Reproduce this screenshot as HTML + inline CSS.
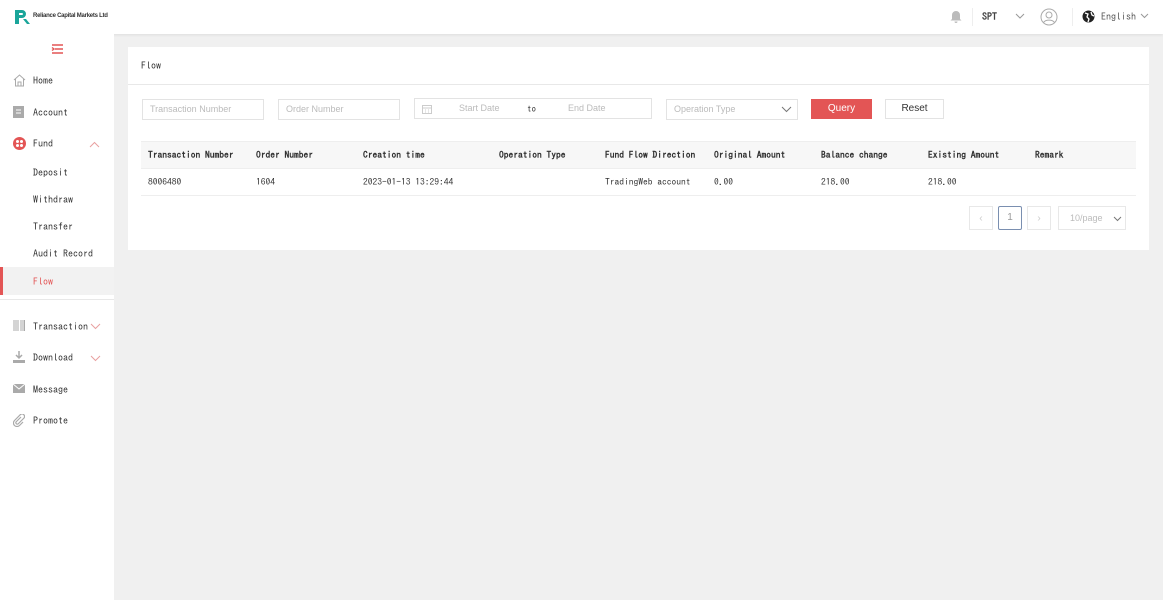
<!DOCTYPE html><html><head><style>
*{box-sizing:border-box;margin:0;padding:0}
body{width:1163px;height:600px;background:#f0f0f0;font-family:"IPAGothic","Liberation Mono",monospace;font-size:10px;color:#333;position:relative;overflow:hidden}
.a{position:absolute}
.hdr{left:0;top:0;width:1163px;height:34px;background:#fff;box-shadow:0 1px 3px rgba(0,0,0,.08)}
.side{left:0;top:34px;width:114px;height:566px;background:#fff}
.mi{position:absolute;left:33px;font-size:10px;color:#333}
.inp{position:absolute;height:21px;border:1px solid #e3e3e3;background:#fff;font-family:"Liberation Sans",sans-serif;font-size:9px;color:#bbb;padding-left:7px;line-height:19px}
th,td{text-align:left;font-size:9.5px;white-space:nowrap;overflow:hidden}
th{border-top:1px solid #eee;border-bottom:1px solid #eee}
.ic{position:absolute}
</style></head><body>
<div class="a hdr">
 <svg class="ic" style="left:14px;top:10px" width="16" height="14" viewBox="0 0 16 14"><path d="M1 0h7a4 4 0 0 1 0 8H5v6H1z M5 3v2h3a1 1 0 0 0 0-2z" fill="#1aa59a"/><path d="M9 9l4 5h3l-4-5z" fill="#1aa59a"/></svg>
 <div class="a" style="left:33px;top:13px;font-family:'Liberation Sans',sans-serif;font-size:6px;font-weight:bold;color:#333;letter-spacing:-.25px">Reliance Capital Markets Ltd</div>
 <svg class="ic" style="left:950px;top:10px" width="12" height="13" viewBox="0 0 12 13"><path d="M6 1a4 4 0 0 1 4 4v4l1.5 1.5h-11L2 9V5a4 4 0 0 1 4-4z M4.5 11.5h3a1.5 1.5 0 0 1-3 0z" fill="#bbb"/></svg>
 <div class="a" style="left:972px;top:8px;width:1px;height:18px;background:#eee"></div>
 <div class="a" style="left:982px;top:12px;font-weight:bold;font-size:10px;color:#444">SPT</div>
 <svg class="ic" style="left:1015px;top:12px" width="10" height="8"><path d="M1 2l4 4 4-4" stroke="#999" fill="none"/></svg>
 <svg class="ic" style="left:1040px;top:8px" width="18" height="18"><circle cx="9" cy="9" r="8" stroke="#aaa" fill="none"/><circle cx="9" cy="7" r="3" stroke="#aaa" fill="none"/><path d="M3.5 14.5a6 4 0 0 1 11 0" stroke="#aaa" fill="none"/></svg>
 <div class="a" style="left:1072px;top:8px;width:1px;height:18px;background:#eee"></div>
 <svg class="ic" style="left:1082px;top:10px" width="13" height="13"><circle cx="6.5" cy="6.5" r="6" fill="#222"/><path d="M3 3l3 1-1 3 2 2-1 3M9 2l1 3 2 1" stroke="#fff" stroke-width="1.3" fill="none"/></svg>
 <div class="a" style="left:1101px;top:12px;color:#555">English</div>
 <svg class="ic" style="left:1140px;top:12px" width="9" height="7"><path d="M1 2l3.5 3.5L8 2" stroke="#999" fill="none"/></svg>
</div>
<div class="a side">
 <svg class="ic" style="left:51px;top:10px" width="13" height="10"><path d="M1 1h11M4 5h8M1 9h11M1 3.5l2 1.5-2 1.5" stroke="#e35555" stroke-width="1.4" fill="none"/></svg>
 <svg class="ic" style="left:13px;top:40px" width="13" height="13"><path d="M1 6l5.5-5 5.5 5M2.5 5v7h8V5M5 12V8h3v4" stroke="#aaa" fill="none"/></svg>
 <div class="mi" style="top:42px">Home</div>
 <svg class="ic" style="left:13px;top:72px" width="11" height="12"><rect width="11" height="12" fill="#aaa"/><path d="M3 4h5M3 7h5" stroke="#fff"/></svg>
 <div class="mi" style="top:74px">Account</div>
 <svg class="ic" style="left:13px;top:103px" width="13" height="13"><circle cx="6.5" cy="6.5" r="6.5" fill="#e35555"/><circle cx="4.5" cy="4.5" r="1.5" fill="#fff"/><circle cx="8.5" cy="4.5" r="1.5" fill="#fff"/><circle cx="4.5" cy="8.5" r="1.5" fill="#fff"/><circle cx="8.5" cy="8.5" r="1.5" fill="#fff"/></svg>
 <div class="mi" style="top:105px">Fund</div>
 <svg class="ic" style="left:89px;top:107px" width="11" height="7"><path d="M1 6l4.5-4.5L10 6" stroke="#e8a0a0" fill="none"/></svg>
 <div class="mi" style="top:134px">Deposit</div>
 <div class="mi" style="top:161px">Withdraw</div>
 <div class="mi" style="top:188px">Transfer</div>
 <div class="mi" style="top:215px">Audit Record</div>
 <div class="a" style="left:0;top:233px;width:114px;height:28px;background:#f2f2f2;border-left:3px solid #e35555"></div>
 <div class="mi" style="top:243px;color:#e35555">Flow</div>
 <div class="a" style="left:0;top:265px;width:114px;height:1px;background:#e8e8e8"></div>
 <svg class="ic" style="left:13px;top:286px" width="12" height="11"><path d="M1 0v11M3 0v11M5 0v11M8 0v11M10 0v11M11.5 0v11" stroke="#aaa"/></svg>
 <div class="mi" style="top:288px">Transaction</div>
 <svg class="ic" style="left:90px;top:289px" width="11" height="7"><path d="M1 1l4.5 4.5L10 1" stroke="#e8a0a0" fill="none"/></svg>
 <svg class="ic" style="left:13px;top:317px" width="12" height="12"><path d="M6 0v7M3 4l3 3 3-3" stroke="#aaa" stroke-width="1.5" fill="none"/><rect y="9" width="12" height="3" fill="#aaa"/></svg>
 <div class="mi" style="top:319px">Download</div>
 <svg class="ic" style="left:90px;top:321px" width="11" height="7"><path d="M1 1l4.5 4.5L10 1" stroke="#e8a0a0" fill="none"/></svg>
 <svg class="ic" style="left:13px;top:350px" width="12" height="9"><rect width="12" height="9" fill="#aaa"/><path d="M0 0l6 5 6-5" stroke="#fff" fill="none"/></svg>
 <div class="mi" style="top:351px">Message</div>
 <svg class="ic" style="left:13px;top:380px" width="12" height="13"><path d="M8 3l-5 5a1.5 1.5 0 0 0 2 2l6-6a2.5 2.5 0 0 0-3.5-3.5L1.5 6.5a3.5 3.5 0 0 0 5 5L10 8" stroke="#aaa" stroke-width="1.2" fill="none"/></svg>
 <div class="mi" style="top:382px">Promote</div>
</div>
<div class="a" style="left:128px;top:47px;width:1021px;height:203px;background:#fff">
 <div class="a" style="left:13px;top:14px">Flow</div>
 <div class="a" style="left:0;top:37px;width:1021px;height:1px;background:#e8e8e8"></div>
 <div class="inp" style="left:14px;top:52px;width:122px">Transaction Number</div>
 <div class="inp" style="left:150px;top:52px;width:122px">Order Number</div>
 <div class="inp" style="left:286px;top:51px;width:238px">
  <svg class="ic" style="left:7px;top:5px" width="10" height="10"><rect x=".5" y="1.5" width="9" height="8" stroke="#ccc" fill="none"/><path d="M.5 4h9M3 6h1M6 6h1M3 8h1M6 8h1" stroke="#ccc"/></svg>
  <span class="a" style="left:44px;top:0">Start Date</span>
  <span class="a" style="left:112px;top:1px;color:#333;font-family:IPAGothic,monospace">to</span>
  <span class="a" style="left:153px;top:0">End Date</span></div>
 <div class="inp" style="left:538px;top:52px;width:132px">Operation Type
  <svg class="ic" style="left:114px;top:6px" width="11" height="7"><path d="M1 1l4.5 4.5L10 1" stroke="#777" fill="none"/></svg></div>
 <div class="a" style="left:683px;top:52px;width:61px;height:20px;background:#e35555;color:#fff;font-family:'Liberation Sans',sans-serif;font-size:10px;text-align:center;line-height:20px">Query</div>
 <div class="a" style="left:757px;top:52px;width:59px;height:20px;border:1px solid #e3e3e3;color:#333;font-family:'Liberation Sans',sans-serif;font-size:10px;text-align:center;line-height:18px">Reset</div>
 <table class="a" style="left:13px;top:94px;width:995px;border-collapse:collapse;table-layout:fixed">
  <colgroup><col style="width:115px"><col style="width:107px"><col style="width:136px"><col style="width:106px"><col style="width:109px"><col style="width:107px"><col style="width:107px"><col style="width:107px"><col></colgroup>
  <tr style="height:27px;background:#f7f7f7;font-weight:bold">
   <th style="padding-left:7px">Transaction Number</th><th>Order Number</th><th>Creation time</th><th>Operation Type</th><th>Fund Flow Direction</th><th>Original Amount</th><th>Balance change</th><th>Existing Amount</th><th>Remark</th></tr>
  <tr style="height:27px;border-bottom:1px solid #eee"><td style="padding-left:7px">8006480</td><td>1604</td><td>2023-01-13 13:29:44</td><td></td><td>TradingWeb account</td><td>0.00</td><td>218.00</td><td>218.00</td><td></td></tr>
 </table>
 <div class="a" style="left:841px;top:159px;width:24px;height:24px;border:1px solid #e8e8e8;color:#ccc;text-align:center;line-height:22px">&lsaquo;</div>
 <div class="a" style="left:870px;top:159px;width:24px;height:24px;border:1px solid #7a8fb0;border-radius:2px;color:#999;text-align:center;line-height:22px;font-family:'Liberation Sans',sans-serif">1</div>
 <div class="a" style="left:899px;top:159px;width:24px;height:24px;border:1px solid #e8e8e8;color:#ccc;text-align:center;line-height:22px">&rsaquo;</div>
 <div class="a" style="left:930px;top:159px;width:68px;height:24px;border:1px solid #e8e8e8;color:#bbb;font-family:'Liberation Sans',sans-serif;font-size:9px;line-height:22px;padding-left:11px">10/page
  <svg class="ic" style="left:54px;top:9px" width="9" height="6"><path d="M1 1l3.5 3.5L8 1" stroke="#777" fill="none"/></svg></div>
</div>
</body></html>
